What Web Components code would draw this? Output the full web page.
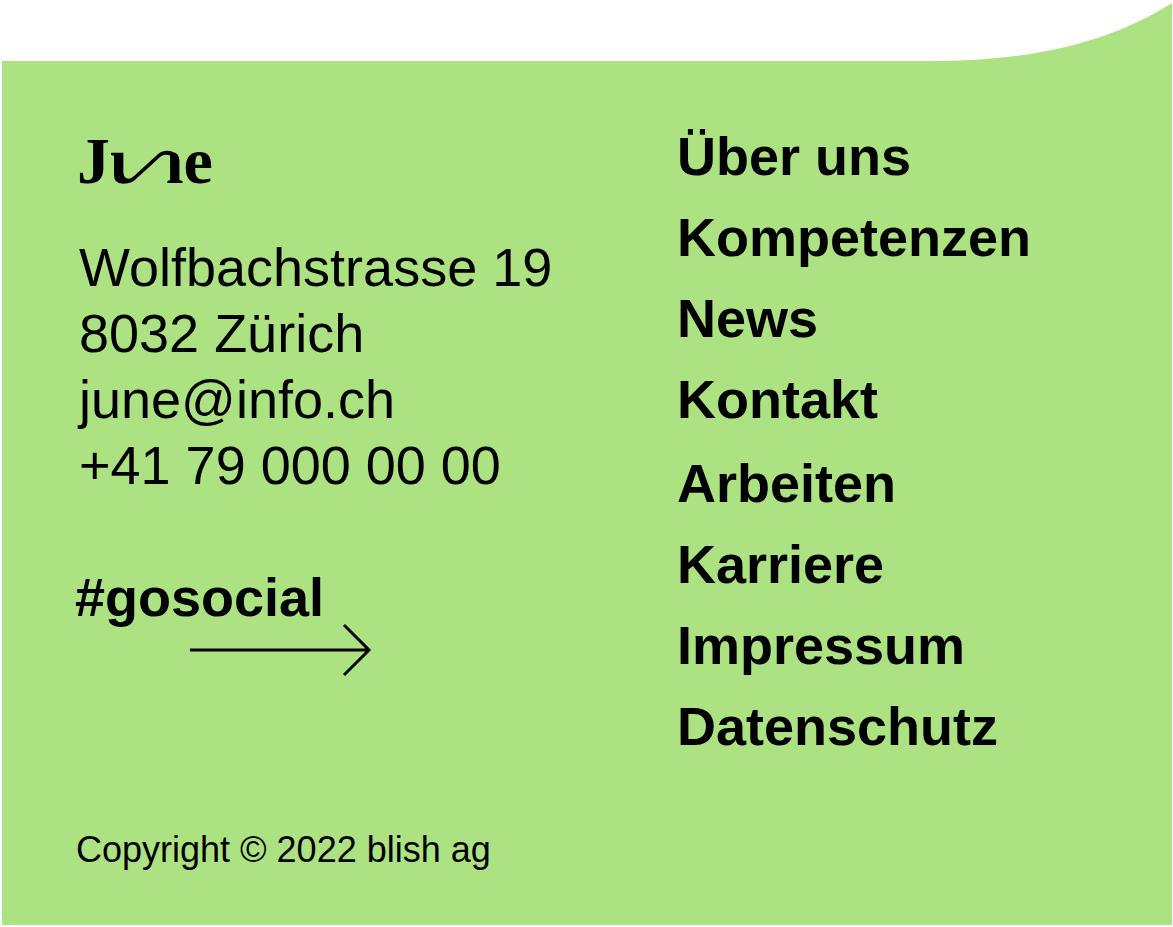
<!DOCTYPE html>
<html lang="de">
<head>
<meta charset="utf-8">
<meta name="viewport" content="width=device-width, initial-scale=1">
<title>June</title>
<style>
  body { margin: 0; background: #fff; font-family: "Liberation Sans", Arial, sans-serif; color: #000; }
</style>
</head>
<body>
<june-footer>
  <june-logo slot="brand"></june-logo>
  <june-address slot="brand"></june-address>
  <june-social slot="brand" href="#gosocial">#gosocial</june-social>
  <june-nav slot="nav">
    <june-link href="#ueber-uns">Über uns</june-link>
    <june-link href="#kompetenzen">Kompetenzen</june-link>
    <june-link href="#news">News</june-link>
    <june-link href="#kontakt">Kontakt</june-link>
  </june-nav>
  <june-nav slot="nav">
    <june-link href="#arbeiten">Arbeiten</june-link>
    <june-link href="#karriere">Karriere</june-link>
    <june-link href="#impressum">Impressum</june-link>
    <june-link href="#datenschutz">Datenschutz</june-link>
  </june-nav>
  <span slot="legal">Copyright © 2022 blish ag</span>
</june-footer>
<script>
const define = (name, html, setup) => customElements.define(name, class extends HTMLElement {
  constructor() {
    super();
    this.attachShadow({ mode: "open" }).innerHTML = html;
  }
  connectedCallback() { if (setup) setup(this); }
});

const linkSetup = el => {
  el.shadowRoot.querySelector("a").href = el.getAttribute("href") || "#";
};

define("june-footer", `
  <style>
    :host { display: block; padding: 3px 1px 2px 2px; }
    .wave { display: block; width: 241px; height: 58px; margin-left: auto; fill: #ace281; }
    footer { background: #ace281; padding: 55px 73px 53px 73px; }
    .columns { display: grid; grid-template-columns: minmax(0, 602fr) minmax(0, 422fr); }
    .nav { display: flex; flex-direction: column; gap: 3px; }
    .brand { display: flex; flex-direction: column; align-items: flex-start; padding-top: 14px; }
    .legal { margin: 61px 0 0; padding-left: 1px; font-size: 36px; line-height: 44px; }
  </style>
  <svg class="wave" viewBox="0 0 241 58" aria-hidden="true"><path d="M0 58C95 58 175 42 241 0V58Z"/></svg>
  <footer>
    <div class="columns">
      <div class="brand"><slot name="brand"></slot></div>
      <div class="nav"><slot name="nav"></slot></div>
    </div>
    <p class="legal"><slot name="legal"></slot></p>
  </footer>`);

define("june-logo", `
  <style>
    :host { display: block; padding-left: 4px; }
    svg { display: block; width: 134px; height: 64px; overflow: visible; }
    text { font: bold 66px "Liberation Serif", "Times New Roman", serif; }
  </style>
  <svg viewBox="0 0 134 64" role="img" aria-label="June">
    <defs>
      <clipPath id="open"><path d="M-4 0H48V64H-4ZM91 0H140V64H86V44H91Z"/></clipPath>
    </defs>
    <text x="-2" y="53" clip-path="url(#open)">June</text>
    <path d="M44 42C45 50 51 50 55 46L78 25C83 20 89 20 94 22V27C89 24 84 24 80 28L57 49C52 54 46 54 42 53Z"/>
  </svg>`);

define("june-address", `
  <style>
    :host { display: block; margin-top: 40px; padding-left: 4px; }
    address { font-style: normal; font-size: 54px; line-height: 66px; white-space: nowrap; }
    a { color: inherit; text-decoration: none; }
  </style>
  <address>
    Wolfbachstrasse 19<br>
    8032 Zürich<br>
    <a href="mailto:june@info.ch">june@info.ch</a><br>
    <a href="tel:+41790000000">+41 79 000 00 00</a>
  </address>`);

define("june-social", `
  <style>
    :host { display: block; margin-top: 66px; }
    a { display: block; position: relative; color: inherit; text-decoration: none; font-weight: bold; font-size: 54px; line-height: 66px; }
    svg { position: absolute; top: 59px; left: 115px; width: 182px; height: 54px; }
  </style>
  <a><slot></slot>
    <svg viewBox="0 0 182 54" fill="none" stroke="#000" stroke-width="3" aria-hidden="true"><path d="M0 27H179M154 2L179 27L154 52"/></svg>
  </a>`, linkSetup);

define("june-nav", `
  <style>
    :host { display: block; }
    nav { display: flex; flex-direction: column; align-items: flex-start; }
  </style>
  <nav><slot></slot></nav>`);

define("june-link", `
  <style>
    :host { display: block; }
    a { display: block; color: inherit; text-decoration: none; font-weight: bold; font-size: 54px; line-height: 81px; }
  </style>
  <a><slot></slot></a>`, linkSetup);
</script>
</body>
</html>
